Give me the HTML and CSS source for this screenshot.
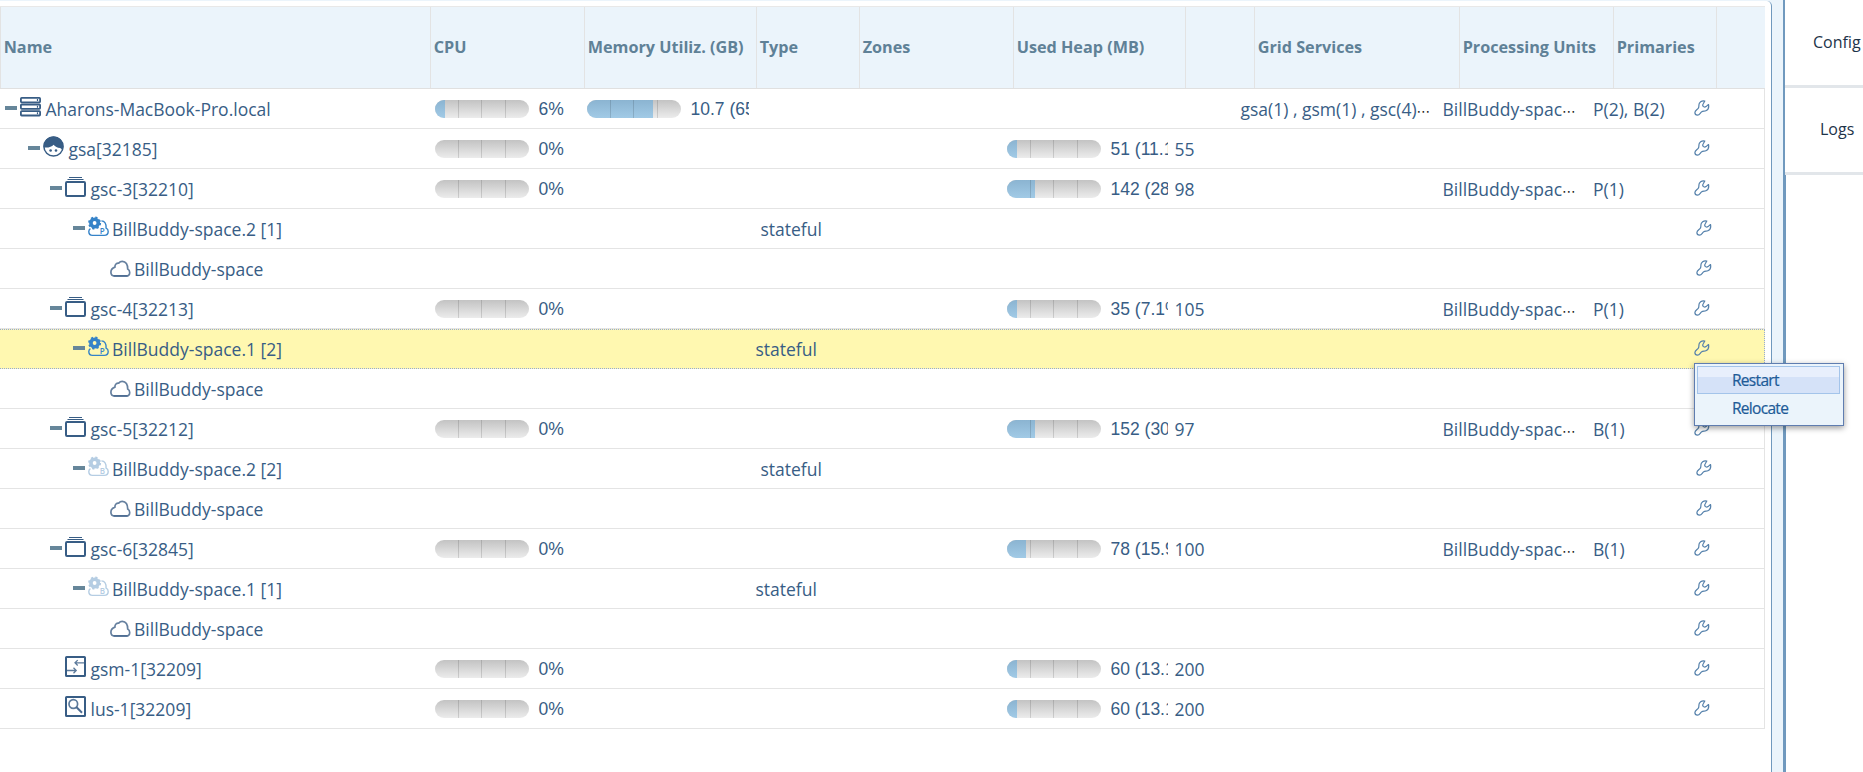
FILE: index.html
```html
<!DOCTYPE html>
<html lang="en">
<head>
<meta charset="utf-8">
<title>Hosts</title>
<link rel="stylesheet" href="styles.css">
</head>
<body>
<svg class="defs" aria-hidden="true">
  <symbol id="server" viewBox="0 0 21 21">
    <g fill="none" stroke="#385d85" stroke-width="1.8"><rect x=".9" y="1.9" width="19.2" height="4.4" rx=".8"/><rect x=".9" y="8.5" width="19.2" height="4.4" rx=".8"/><rect x=".9" y="15.1" width="19.2" height="4.4" rx=".8"/></g>
    <path d="M17.500 3v2M17.500 9.700v2M17.500 16.300v2" stroke="#385d85" stroke-width="1.200"/>
  </symbol>
  <symbol id="agent" viewBox="0 0 21 21">
    <circle cx="10.500" cy="10.500" r="9.600" fill="#fff" stroke="#385d85" stroke-width="1.500"/>
    <path d="M.8 11.500C.4 4.800 4.800.6 10.500.6S20.400 4.600 20.200 11.500c-.1 1.400-.3 2.400-.7 3.300-.5-1.300-1.300-2.200-2.400-2.700-2.700-.3-4.900-1.500-6.500-3.400-2 2-4.600 3.200-9.800 2.800z" fill="#385d85"/>
    <circle cx="7.600" cy="14.500" r="1.300" fill="#385d85"/><circle cx="13" cy="14.500" r="1.300" fill="#385d85"/>
  </symbol>
  <symbol id="container" viewBox="0 0 21 21">
    <rect x="1" y="5.900" width="19" height="14" rx="1" fill="none" stroke="#385d85" stroke-width="2"/>
    <path d="M4 1.500h13M2.500 3.500h16" stroke="#385d85" stroke-width="1"/>
  </symbol>
  <symbol id="unit" viewBox="0 0 21 21">
    <path d="M2.400 12.600C1.200 13.300.8 14.400.8 15.600c0 2.300 1.600 3.800 3.700 3.800h11.700c2.300 0 4-1.500 4-3.800 0-1.700-.8-2.900-2.100-3.500.2-3.900-1.100-7-4.700-7.200" fill="none" stroke="currentColor" stroke-width="1.400"/>
    <circle cx="6.600" cy="7" r="3.700" fill="none" stroke="currentColor" stroke-width="3.600"/>
    <circle cx="6.600" cy="7" r="5.500" fill="none" stroke="currentColor" stroke-width="2" stroke-dasharray="2.160 2.160"/>
  </symbol>
  <symbol id="cloud" viewBox="0 0 21 21">
    <path d="M4.800 20h11.400c2.200 0 3.500-1.600 3.500-3.600 0-1.600-.8-2.800-2-3.400.1-4.300-1.800-7.700-5.400-7.700-1.700 0-2.700.7-3.500 1.800-2.300-.3-3.900 1.300-3.900 4C2.300 12 .9 14 .9 16.200.9 18.500 2.600 20 4.800 20z" fill="none" stroke="#66809f" stroke-width="1.700"/>
    <path d="M3.500 19.900h14" stroke="#4c6c92" stroke-width="1.700"/>
  </symbol>
  <symbol id="manager" viewBox="0 0 21 21">
    <rect x="1" y="1" width="19" height="19" rx=".6" fill="none" stroke="#385d85" stroke-width="2"/>
    <path d="M2 14.500h9M8.500 11.800l2.700 2.700-2.700 2.700M19 6.800h-9M12.700 4.100L10 6.800l2.700 2.700" fill="none" stroke="#5c7a9b" stroke-width="1.300"/>
  </symbol>
  <symbol id="lookup" viewBox="0 0 21 21">
    <rect x="1" y="1" width="19" height="19" rx=".6" fill="none" stroke="#385d85" stroke-width="2"/>
    <circle cx="8.300" cy="8" r="4.300" fill="none" stroke="#5c7a9b" stroke-width="1.700"/>
    <path d="M11.300 11l5.700 5.700" stroke="#4c6c92" stroke-width="2"/>
  </symbol>
  <symbol id="wrench" viewBox="0 0 16 16">
    <path d="M10.800 1C7.600.3 4.900 2.300 4.900 5c0 1.300.2 2.200-.7 3.300C3.100 9.600.9 10.500.9 12.500c0 1.700 1.100 2.600 2.600 2.600 2.300 0 2.500-2.100 4.200-3.300 1.300-1 2.800-.3 4.200-1 2.300-1.100 3.200-3.600 2.600-6.300L12 6.600c-1 .7-2.600.6-3.100-.5-.4-1-.1-1.800.5-2.600z" fill="none" stroke="#5480ab" stroke-width="1.200" stroke-linejoin="round"/>
  </symbol>
</svg>

<div class="app">
  <main class="hosts">
    <div class="head">
      <div>Name</div><div>CPU</div><div>Memory Utiliz. (GB)</div><div>Type</div><div>Zones</div><div>Used Heap (MB)</div><div></div><div>Grid Services</div><div>Processing Units</div><div>Primaries</div><div></div>
    </div>
    <div class="body">
      <div class="row">
        <div class="name d0"><i class="fold"></i><svg><use href="#server"/></svg><span>Aharons-MacBook-Pro.local</span></div>
        <div class="cpu"><div class="gauge"><b style="width:10px"></b></div><span>6%</span></div>
        <div class="mem"><div class="gauge"><b style="width:66px"></b></div><span>10.7 (65%)</span></div>
        <div class="svc">gsa(1) , gsm(1) , gsc(4)<em>⋯</em></div>
        <div class="pu">BillBuddy-spac<em>⋯</em></div><div class="prim">P(2), B(2)</div>
        <svg class="tool"><use href="#wrench"/></svg>
      </div>
      <div class="row">
        <div class="name d1"><i class="fold"></i><svg><use href="#agent"/></svg><span>gsa[32185]</span></div>
        <div class="cpu"><div class="gauge"></div><span>0%</span></div>
        <div class="heap"><div class="gauge"><b style="width:10px"></b></div><span>51 (11.1%)</span></div><div class="thr">55</div>
        <svg class="tool"><use href="#wrench"/></svg>
      </div>
      <div class="row">
        <div class="name d2"><i class="fold"></i><svg><use href="#container"/></svg><span>gsc-3[32210]</span></div>
        <div class="cpu"><div class="gauge"></div><span>0%</span></div>
        <div class="heap"><div class="gauge"><b style="width:28px"></b></div><span>142 (28%)</span></div><div class="thr">98</div>
        <div class="pu">BillBuddy-spac<em>⋯</em></div><div class="prim">P(1)</div>
        <svg class="tool"><use href="#wrench"/></svg>
      </div>
      <div class="row shifted">
        <div class="name d3"><i class="fold"></i><svg class="primary"><use href="#unit"/><text x="11.800" y="17.600">P</text></svg><span>BillBuddy-space.2 [1]</span></div>
        <div class="type">stateful</div>
        <svg class="tool"><use href="#wrench"/></svg>
      </div>
      <div class="row shifted">
        <div class="name d4"><svg><use href="#cloud"/></svg><span>BillBuddy-space</span></div>
        <svg class="tool"><use href="#wrench"/></svg>
      </div>
      <div class="row">
        <div class="name d2"><i class="fold"></i><svg><use href="#container"/></svg><span>gsc-4[32213]</span></div>
        <div class="cpu"><div class="gauge"></div><span>0%</span></div>
        <div class="heap"><div class="gauge"><b style="width:10px"></b></div><span>35 (7.1%)</span></div><div class="thr">105</div>
        <div class="pu">BillBuddy-spac<em>⋯</em></div><div class="prim">P(1)</div>
        <svg class="tool"><use href="#wrench"/></svg>
      </div>
      <div class="row selected">
        <div class="name d3"><i class="fold"></i><svg class="primary"><use href="#unit"/><text x="11.800" y="17.600">P</text></svg><span>BillBuddy-space.1 [2]</span></div>
        <div class="type">stateful</div>
        <svg class="tool"><use href="#wrench"/></svg>
      </div>
      <div class="row">
        <div class="name d4"><svg><use href="#cloud"/></svg><span>BillBuddy-space</span></div>
      </div>
      <div class="row">
        <div class="name d2"><i class="fold"></i><svg><use href="#container"/></svg><span>gsc-5[32212]</span></div>
        <div class="cpu"><div class="gauge"></div><span>0%</span></div>
        <div class="heap"><div class="gauge"><b style="width:28px"></b></div><span>152 (30%)</span></div><div class="thr">97</div>
        <div class="pu">BillBuddy-spac<em>⋯</em></div><div class="prim">B(1)</div>
        <svg class="tool"><use href="#wrench"/></svg>
      </div>
      <div class="row shifted">
        <div class="name d3"><i class="fold"></i><svg class="backup"><use href="#unit"/><text x="11.800" y="17.600">B</text></svg><span>BillBuddy-space.2 [2]</span></div>
        <div class="type">stateful</div>
        <svg class="tool"><use href="#wrench"/></svg>
      </div>
      <div class="row shifted">
        <div class="name d4"><svg><use href="#cloud"/></svg><span>BillBuddy-space</span></div>
        <svg class="tool"><use href="#wrench"/></svg>
      </div>
      <div class="row">
        <div class="name d2"><i class="fold"></i><svg><use href="#container"/></svg><span>gsc-6[32845]</span></div>
        <div class="cpu"><div class="gauge"></div><span>0%</span></div>
        <div class="heap"><div class="gauge"><b style="width:19px"></b></div><span>78 (15.9%)</span></div><div class="thr">100</div>
        <div class="pu">BillBuddy-spac<em>⋯</em></div><div class="prim">B(1)</div>
        <svg class="tool"><use href="#wrench"/></svg>
      </div>
      <div class="row">
        <div class="name d3"><i class="fold"></i><svg class="backup"><use href="#unit"/><text x="11.800" y="17.600">B</text></svg><span>BillBuddy-space.1 [1]</span></div>
        <div class="type">stateful</div>
        <svg class="tool"><use href="#wrench"/></svg>
      </div>
      <div class="row">
        <div class="name d4"><svg><use href="#cloud"/></svg><span>BillBuddy-space</span></div>
        <svg class="tool"><use href="#wrench"/></svg>
      </div>
      <div class="row">
        <div class="name d2 leaf"><svg><use href="#manager"/></svg><span>gsm-1[32209]</span></div>
        <div class="cpu"><div class="gauge"></div><span>0%</span></div>
        <div class="heap"><div class="gauge"><b style="width:10px"></b></div><span>60 (13.1%)</span></div><div class="thr">200</div>
        <svg class="tool"><use href="#wrench"/></svg>
      </div>
      <div class="row">
        <div class="name d2 leaf"><svg><use href="#lookup"/></svg><span>lus-1[32209]</span></div>
        <div class="cpu"><div class="gauge"></div><span>0%</span></div>
        <div class="heap"><div class="gauge"><b style="width:10px"></b></div><span>60 (13.1%)</span></div><div class="thr">200</div>
        <svg class="tool"><use href="#wrench"/></svg>
      </div>
    </div>
  </main>
  <div class="splitter"></div>
  <aside class="tabs"><div class="tab config">Config</div><div class="tab">Logs</div></aside>
</div>

<div class="menu"><div class="item active">Restart</div><div class="item">Relocate</div></div>
</body>
</html>
```
FILE: styles.css
```css
* { box-sizing: border-box; }
body { margin: 0; width: 1863px; height: 772px; overflow: hidden; background: #fff; color: #385d85; font: 17.500px "Open Sans", sans-serif; }
.defs { position: absolute; width: 0; height: 0; }
.app { display: flex; height: 772px; background: #ebf4fb; }
.hosts { width: 1772px; flex: none; margin-top: 1px; padding-top: 5px; background: #fff; border-right: 1px solid #7099be; border-top-right-radius: 5px; }
.head { display: grid; grid-template-columns: 430px 154px 172px 103px 154px 172px 69px 205px 154px 103px 49px; width: 1765px; height: 83px; background: #ebf4fb; border-top: 1px solid #e8e8e8; border-bottom: 1px solid #e0e0e0; }
.head div { border-left: 1px solid #e3e3e3; padding-left: 2.700px; line-height: 80px; font-size: 16.200px; font-weight: 700; color: #5f8197; white-space: nowrap; }
.body { width: 1765px; }
.row { display: grid; grid-template-columns: 435px 152px 168px 252px 167px 66px 202px 151px 100px 1fr; height: 40px; border-right: 1px solid #e4e4e4; border-bottom: 1px solid #e4e4e4; line-height: 40px; white-space: nowrap; }
.row > * { grid-row: 1; }
.row.selected { background: #fff8b0; border: 1px dotted #95a9d4; border-left: 0; line-height: 38px; }
.name { grid-column: 1; display: flex; }
.name svg { width: 21px; height: 21px; margin: 7px 4.500px 0 0; overflow: visible; }
.fold { width: 12px; height: 4px; margin: 17px 3px 0 0; background: #66869a; }
.d0 { padding-left: 5px; }
.d1 { padding-left: 28px; }
.d2 { padding-left: 50px; }
.d3 { padding-left: 73px; }
.d4 { padding-left: 110px; }
.d2.leaf { padding-left: 65px; }
.d3 svg, .d4 svg { margin-right: 3px; }
.selected .name svg { margin-top: 6px; }
.selected .fold { margin-top: 16px; }
.primary { color: #3583c8; }
.backup { color: #b5cde3; }
.name text { font: 600 8px "Open Sans", sans-serif; fill: currentColor; }
.cpu { grid-column: 2; }
.mem { grid-column: 3; }
.type { grid-column: 4; padding-left: .5px; }
.shifted .type { padding-left: 5.500px; }
.heap { grid-column: 5; }
.thr { grid-column: 6; padding-left: .5px; }
.svc { grid-column: 7; padding-left: .5px; }
.pu { grid-column: 8; padding-left: .5px; }
.prim { grid-column: 9; }
.cpu, .mem, .heap { display: flex; width: 162px; gap: 9.500px; overflow: hidden; font: 17.500px/40px "Liberation Sans", sans-serif; }
.heap { width: 161px; }
.gauge { flex: none; width: 94px; height: 18px; margin-top: 11px; border-radius: 9px; overflow: hidden; background: linear-gradient(90deg, transparent 23px, #0002 23px 24px, transparent 24px 46px, #0002 46px 47px, transparent 47px 70px, #0002 70px 71px, transparent 71px), linear-gradient(#c3c3c3, #ececec); }
.gauge b { display: block; height: 18px; background: linear-gradient(90deg, transparent 23px, #0002 23px 24px, transparent 24px 46px, #0002 46px 47px, transparent 47px), linear-gradient(#8bb4d1, #a1cae6); }
em { font: 14px "DejaVu Sans", sans-serif; color: #222; }
.tool { grid-column: 10; width: 16px; height: 16px; margin: 10.500px 0 0 .5px; }
.shifted .tool { margin-left: 2.500px; }
.selected .tool { margin-top: 9.500px; }
.splitter { flex: none; width: 14px; border-right: 3px solid #7099be; }
.tabs { flex: none; width: 90px; margin-left: -1px; background: linear-gradient(#fff, #fff) 1px 0 no-repeat; }
.tab { height: 87px; width: 90px; padding-left: 35px; background: #fff; border-bottom: 3px solid #e2e6ea; color: #1d3349; font-size: 16px; line-height: 83px; white-space: nowrap; }
.tab.config { padding-left: 28px; height: 88px; line-height: 85px; }
.menu { position: absolute; left: 1694px; top: 363px; width: 150px; height: 63px; padding: 2px; border: 1px solid #5f7db0; background: #ebf4fb; box-shadow: 0 2px 6px #0006; }
.item { width: 143px; height: 28px; padding-left: 34px; border: 1px solid transparent; font-size: 15.500px; line-height: 26px; letter-spacing: -.7px; color: #205a97; -webkit-text-stroke: .2px #205a97; }
.item.active { border-color: #a3c4ea; background: linear-gradient(#e8effc 0 38%, #d5e2f8 38%); }
```
